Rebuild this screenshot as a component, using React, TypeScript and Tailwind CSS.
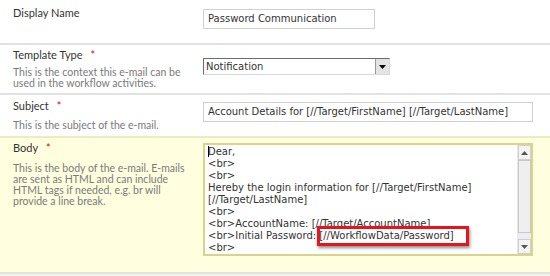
import { FC } from "react";

const label = "text-[11px] leading-[14px] text-[#333]";
const desc = "text-[10.5px] leading-[11px] text-[#7a7a7a]";
const field = "font-['DejaVu_Sans',sans-serif] text-[10px] text-[#333]";

const Star = () => <span className="ml-[8px] text-[#e00]">*</span>;

const bodyLines = [
	"Dear,",
	"<br>",
	"<br>",
	"Hereby the login information for [//Target/FirstName]",
	"[//Target/LastName]",
	"<br>",
	"<br>AccountName: [//Target/AccountName]",
	"<br>Initial Password: [//WorkflowData/Password]",
	"<br>",
	"<br>Regards",
];

const App: FC = () => {
	return (
		<div className="w-[550px] h-[276px] overflow-hidden bg-[#f2f2f2] font-['Lato',sans-serif]">
			{/* display name */}
			<div className="flex h-[45px] bg-white border-b-2 border-[#e2e2e2]">
				<div className="w-[203px] pl-[13px] pt-[6px]">
					<div className={label}>Display Name</div>
				</div>
				<div className="pt-[9px]">
					<div className={`w-[172px] h-[20px] border border-[#d0d0d0] bg-white pl-[4px] leading-[18px] ${field}`}>
						Password Communication
					</div>
				</div>
			</div>

			{/* template type */}
			<div className="flex h-[50px] bg-white border-b-2 border-[#e2e2e2]">
				<div className="w-[203px] pl-[13px] pt-[3px]">
					<div className={label}>
						Template Type
						<Star />
					</div>
					<div className={`${desc} mt-[5px]`}>
						This is the context this e-mail can be
						<br />
						used in the workflow activities.
					</div>
				</div>
				<div className="pt-[13px]">
					<div className="flex w-[187px] h-[17px] border border-t-[#6b6b6b] border-l-[#6b6b6b] border-r-[#d8d8d8] border-b-[#d8d8d8] bg-white">
						<div className={`flex-1 pl-[2px] leading-[15px] ${field} text-[#111]`}>Notification</div>
						<div className="w-[14px] h-[15px] bg-[#e4e4e4] border-l border-[#9a9a9a] flex items-center justify-center">
							<svg width="7" height="4" viewBox="0 0 7 4">
								<path d="M0 0h7L3.5 4z" fill="#000" />
							</svg>
						</div>
					</div>
				</div>
			</div>

			{/* subject */}
			<div className="flex h-[41px] bg-white">
				<div className="w-[203px] pl-[13px] pt-[4px]">
					<div className={label}>
						Subject
						<Star />
					</div>
					<div className={`${desc} mt-[7px]`}>This is the subject of the e-mail.</div>
				</div>
				<div className="pt-[7px]">
					<div className={`w-[330px] h-[20px] border border-[#d0d0d0] bg-white pl-[4px] leading-[18px] ${field}`}>
						Account Details for [//Target/FirstName] [//Target/LastName]
					</div>
				</div>
			</div>

			{/* body */}
			<div className="flex h-[138px] bg-[#ffffdf] border-t-2 border-[#ecebc4] border-b-2 border-b-[#e4e4d6]">
				<div className="w-[203px] pl-[13px] pt-[3px]">
					<div className={label}>
						Body
						<Star />
					</div>
					<div className={`${desc} mt-[8px]`}>
						This is the body of the e-mail. E-mails
						<br />
						are sent as HTML and can include
						<br />
						HTML tags if needed, e.g. br will
						<br />
						provide a line break.
					</div>
				</div>
				<div className="pt-[5px]">
					<div className="relative flex w-[330px] h-[113px] border-2 border-[#d8d48c] bg-white">
						<div className={`flex-1 overflow-hidden pl-[3px] pt-[1px] leading-[12px] ${field}`}>
							{bodyLines.map((l, i) => (
								<div key={i} className="whitespace-nowrap">
									{i === 0 && <span className="inline-block w-px h-[11px] bg-black align-[-2px] mr-[-1px]" />}
									{l}
								</div>
							))}
						</div>
						<div className="w-[14px] flex flex-col bg-[#ececf2] border-l border-[#e8e8e8]">
							<div className="h-[15px] flex items-center justify-center border border-[#cfcfcf] bg-[#f4f4f4]">
								<svg width="7" height="4" viewBox="0 0 7 4">
									<path d="M3.5 0L7 4H0z" fill="#555" />
								</svg>
							</div>
							<div className="h-[73px] border border-[#c8c8c8] bg-[#efefef]" />
							<div className="flex-1" />
							<div className="h-[15px] flex items-center justify-center border border-[#cfcfcf] bg-[#f4f4f4]">
								<svg width="7" height="4" viewBox="0 0 7 4">
									<path d="M0 0h7L3.5 4z" fill="#555" />
								</svg>
							</div>
						</div>
						<div className="absolute left-[112px] top-[81px] w-[152px] h-[20px] border-[3px] border-[#e8141c] shadow-[1px_2px_3px_rgba(0,0,0,0.45)]" />
					</div>
				</div>
			</div>
		</div>
	);
};

export default App;
